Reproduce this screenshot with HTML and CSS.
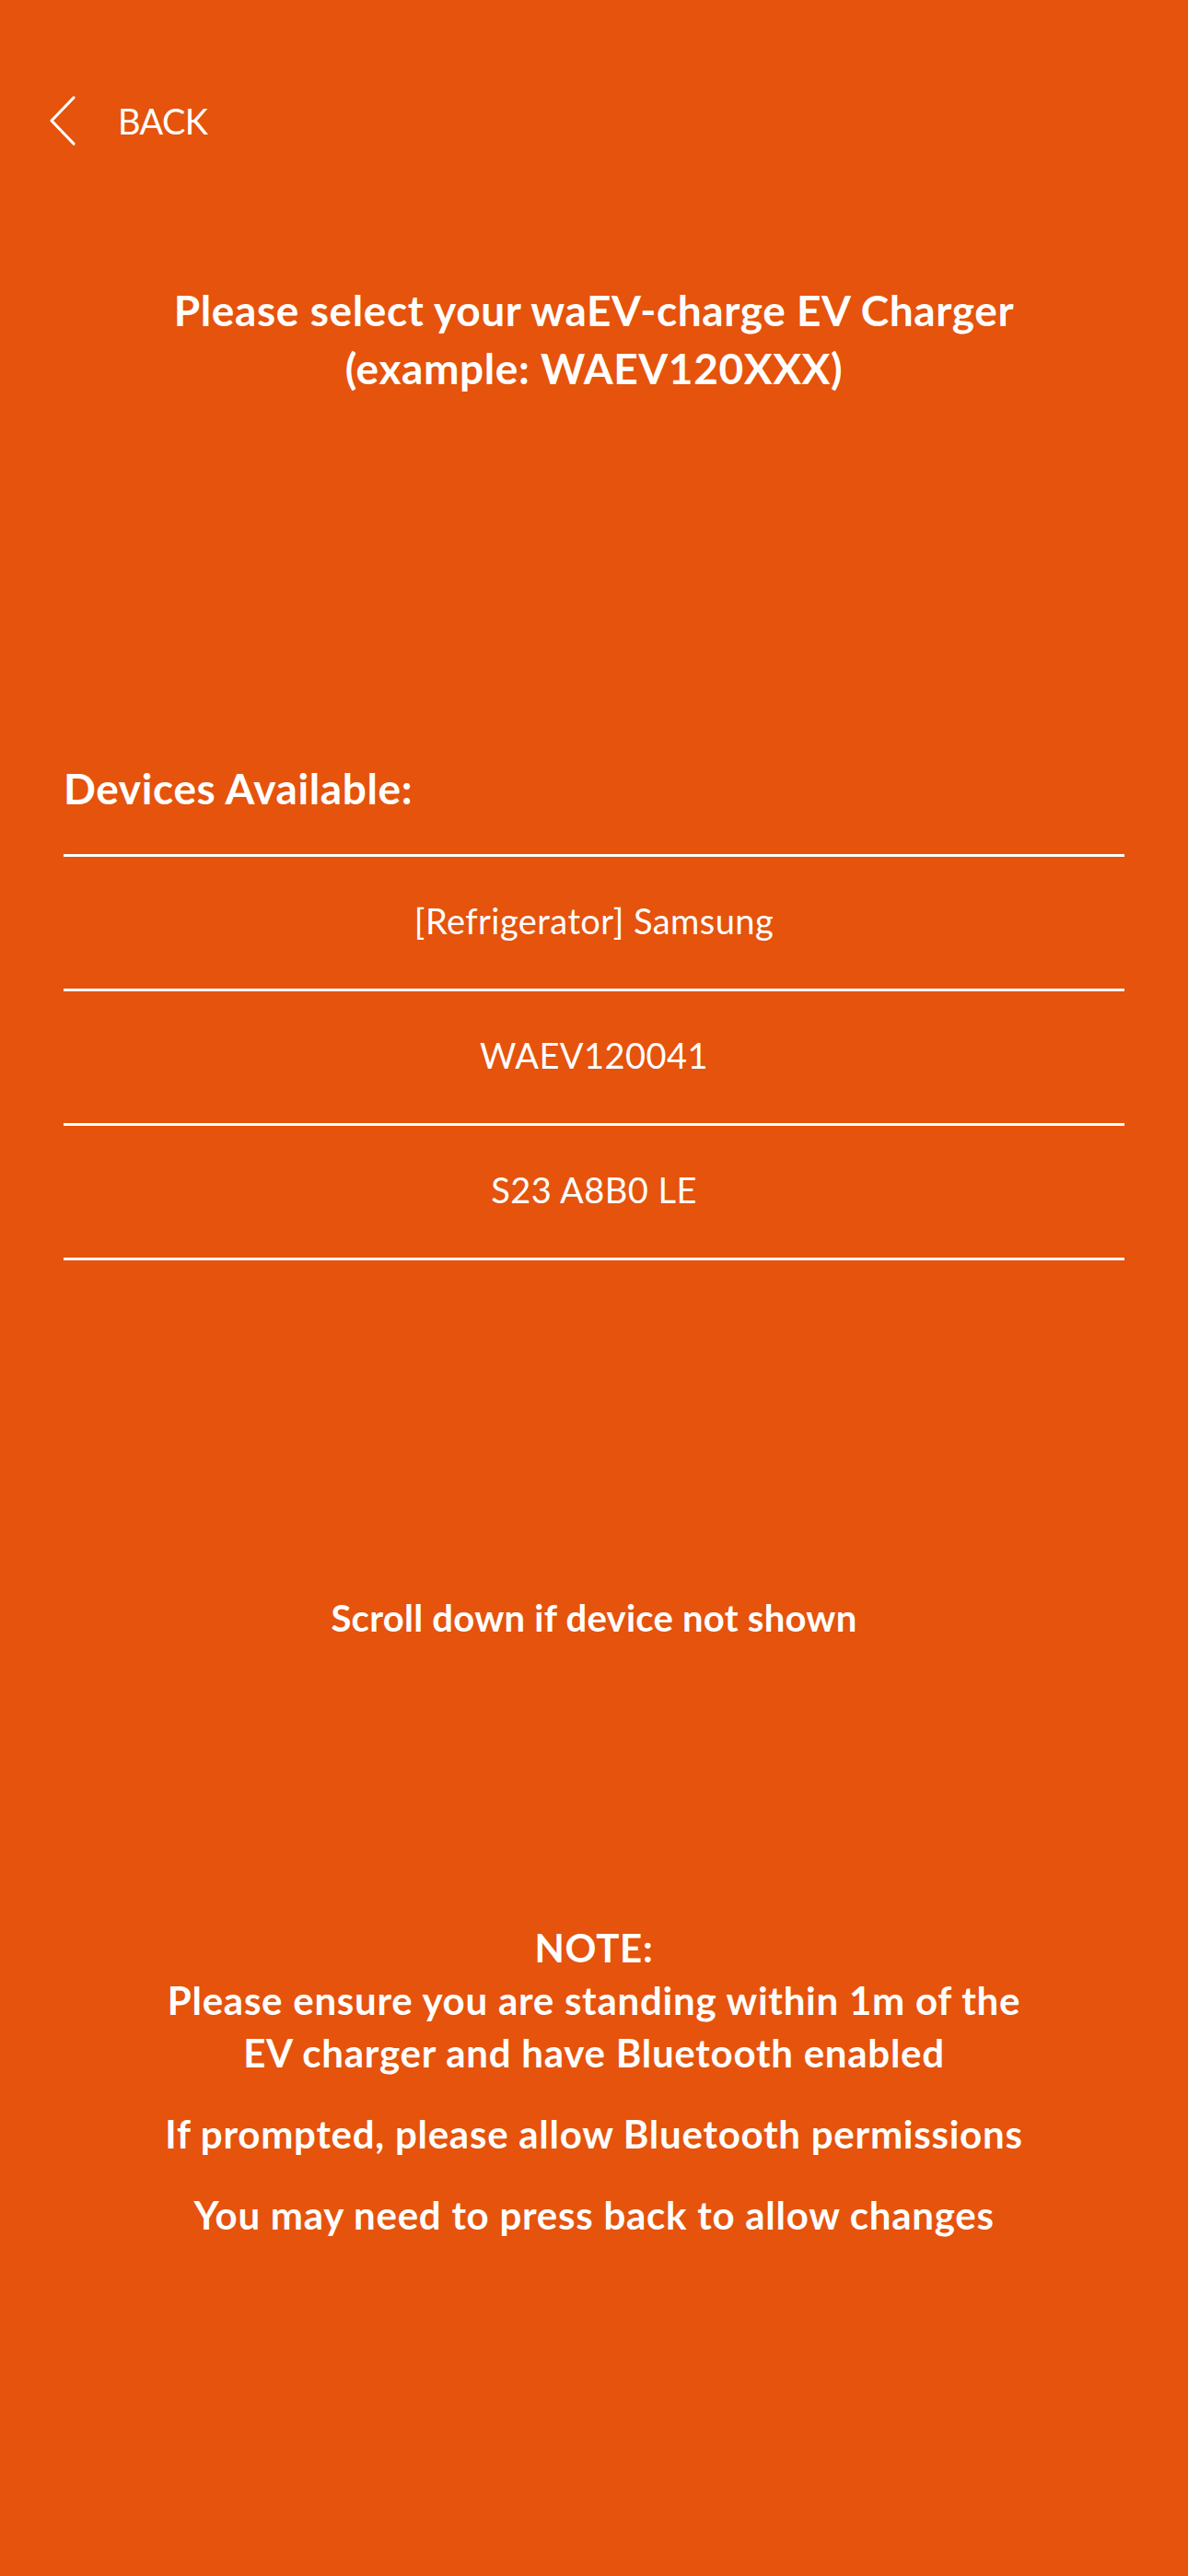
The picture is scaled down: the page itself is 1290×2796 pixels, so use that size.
FILE: index.html
```html
<!DOCTYPE html>
<html lang="en">
<head>
<meta charset="utf-8">
<title>Select Charger</title>
<link rel="stylesheet" href="styles.css">
</head>
<body>
<div class="screen">
  <header class="topbar">
    <svg class="chev" viewBox="0 0 30 56" width="30" height="56" aria-hidden="true">
      <polyline points="27,3 3,28 27,53" fill="none" stroke="#fff" stroke-width="3.2" stroke-linecap="round" stroke-linejoin="round"/>
    </svg>
    <span class="back">BACK</span>
  </header>

  <h1 class="title">Please select your waEV-charge EV Charger<br>(example: WAEV120XXX)</h1>

  <h2 class="devices">Devices Available:</h2>

  <ul class="list">
    <li class="item">[Refrigerator] Samsung</li>
    <li class="item">WAEV120041</li>
    <li class="item">S23 A8B0 LE</li>
  </ul>

  <p class="scroll">Scroll down if device not shown</p>

  <div class="note">
    <p class="note-p">NOTE:<br>Please ensure you are standing within 1m of the<br>EV charger and have Bluetooth enabled</p>
    <p class="note-p">If prompted, please allow Bluetooth permissions</p>
    <p class="note-p">You may need to press back to allow changes</p>
  </div>
</div>
</body>
</html>
```

FILE: styles.css
```css
html, body {
  margin: 0;
  padding: 0;
  background: #e5530c;
}
body {
  font-family: "Lato", "Liberation Sans", sans-serif;
  color: #fff;
  min-height: 2796px;
}
.screen {
  padding: 0 69px;
}
.topbar {
  display: flex;
  align-items: center;
  gap: 45px;
  padding-top: 103px;
  margin-left: -16px;
  height: 56px;
}
.chev {
  display: block;
}
.back {
  font-size: 38px;
  line-height: 56px;
  font-weight: 400;
  letter-spacing: -0.6px;
}
.title {
  margin: 146px 0 0;
  font-size: 46px;
  line-height: 63px;
  font-weight: 700;
  letter-spacing: 0.6px;
  text-align: center;
}
.devices {
  margin: 393px 0 0;
  font-size: 46px;
  line-height: 63px;
  font-weight: 700;
  letter-spacing: 0.6px;
}
.list {
  list-style: none;
  margin: 40px 0 0;
  padding: 0;
  border-bottom: 3px solid #fff;
}
.item {
  border-top: 3px solid #fff;
  height: 146px;
  padding-bottom: 5px;
  box-sizing: border-box;
  display: flex;
  align-items: center;
  justify-content: center;
  font-size: 38px;
  font-weight: 400;
  letter-spacing: 0.45px;
}
.scroll {
  margin: 360px 0 0;
  font-size: 40px;
  line-height: 56px;
  font-weight: 700;
  letter-spacing: 0.25px;
  text-align: center;
}
.note {
  margin-top: 302px;
  display: flex;
  flex-direction: column;
  gap: 31px;
  text-align: center;
}
.note-p {
  margin: 0;
  font-size: 42px;
  line-height: 57px;
  font-weight: 700;
  letter-spacing: 0.75px;
}
```
